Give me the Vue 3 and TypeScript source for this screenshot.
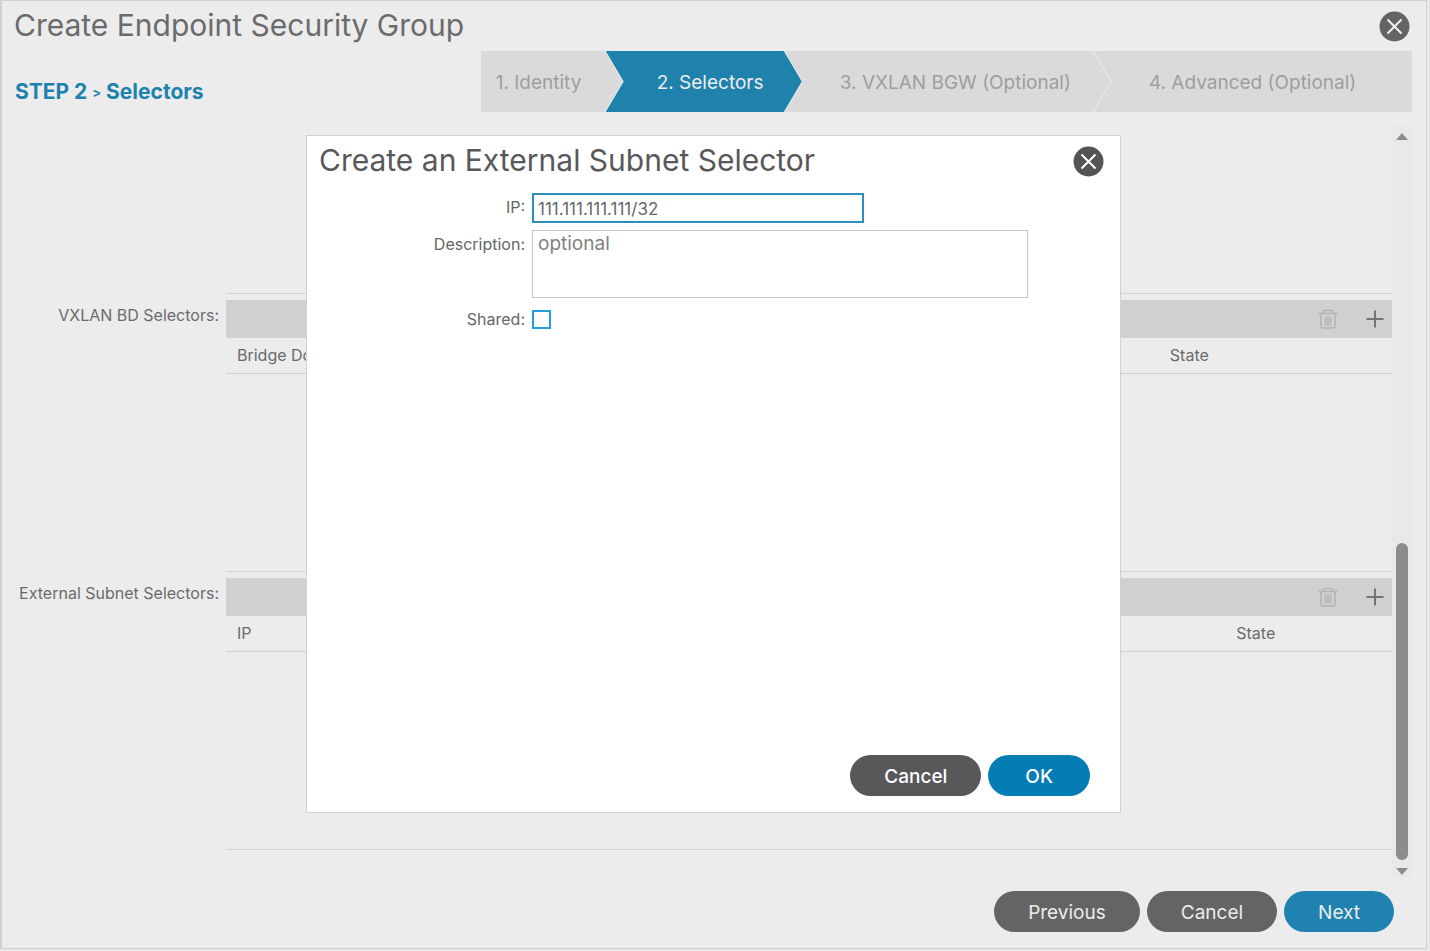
<script setup lang="ts">
import { ref } from 'vue'

interface Step {
  label: string
  active: boolean
}

interface SelectorGrid {
  id: string
  label: string
  firstColumn: string
  stateWidth: string
}

const steps: Step[] = [
  { label: '1. Identity', active: false },
  { label: '2. Selectors', active: true },
  { label: '3. VXLAN BGW (Optional)', active: false },
  { label: '4. Advanced (Optional)', active: false },
]

const grids: SelectorGrid[] = [
  { id: 'vxlan', label: 'VXLAN BD Selectors:', firstColumn: 'Bridge Domain', stateWidth: '20%' },
  { id: 'subnet', label: 'External Subnet Selectors:', firstColumn: 'IP', stateWidth: '14.3%' },
]

const ip = ref('111.111.111.111/32')
const description = ref('')
const shared = ref(false)
</script>

<template>
  <div class="page">
    <main class="wizard">
      <header class="bar">
        <h1 class="title">Create Endpoint Security Group</h1>
        <button class="close" type="button" aria-label="Close wizard">
          <svg viewBox="0 0 31 31" width="31" height="31"><circle cx="15.5" cy="15.5" r="15" /><path d="M8.5 8.5l14 14M22.5 8.5l-14 14" /></svg>
        </button>
      </header>

      <div class="progress">
        <h2 class="step-title">STEP 2 <span class="separator">&gt;</span> Selectors</h2>
        <ol class="steps">
          <li v-for="step in steps" :key="step.label" class="step" :class="{ active: step.active }">
            {{ step.label }}
          </li>
        </ol>
      </div>

      <div class="content">
        <div class="fields">
          <div class="previous-grid"></div>
          <section v-for="grid in grids" :key="grid.id" class="field">
            <h3 :id="grid.id" class="label">{{ grid.label }}</h3>
            <div class="grid">
              <div class="toolbar">
                <button type="button" class="tool trash" aria-label="Delete" disabled>
                  <svg viewBox="0 0 20 20" width="20" height="20">
                    <path d="M0.5 4.5h19M5.5 4V2.5q0-1 1-1h7q1 0 1 1V4M3 5v12q0 2 2 2h10q2 0 2-2V5M7.5 7.5v9M10 7.5v9M12.5 7.5v9" />
                  </svg>
                </button>
                <button type="button" class="tool" aria-label="Add">
                  <svg viewBox="0 0 20 20" width="20" height="20"><path d="M1.5 10h17M10 1.5v17" /></svg>
                </button>
              </div>
              <table :aria-labelledby="grid.id">
                <thead>
                  <tr>
                    <th scope="col">{{ grid.firstColumn }}</th>
                    <th scope="col" :style="{ width: grid.stateWidth }">State</th>
                  </tr>
                </thead>
              </table>
            </div>
          </section>
        </div>
        <div class="scrollbar" aria-hidden="true">
          <span class="arrow up"></span>
          <span class="track"><span class="thumb"></span></span>
          <span class="arrow down"></span>
        </div>
      </div>

      <footer class="actions">
        <button type="button" class="pill muted">Previous</button>
        <button type="button" class="pill muted">Cancel</button>
        <button type="button" class="pill next">Next</button>
      </footer>

      <div class="overlay">
        <form class="dialog" role="dialog" aria-labelledby="dialog-title" @submit.prevent>
          <header class="bar">
            <h2 id="dialog-title" class="title">Create an External Subnet Selector</h2>
            <button class="close" type="button" aria-label="Close dialog">
              <svg viewBox="0 0 31 31" width="31" height="31"><circle cx="15.5" cy="15.5" r="15" /><path d="M8.5 8.5l14 14M22.5 8.5l-14 14" /></svg>
            </button>
          </header>
          <div class="form">
            <label class="label" for="ip">IP:</label>
            <input id="ip" v-model="ip" class="ip" type="text" />
            <label class="label" for="description">Description:</label>
            <textarea id="description" v-model="description" class="description" placeholder="optional"></textarea>
            <label class="label" for="shared">Shared:</label>
            <input id="shared" v-model="shared" class="check" type="checkbox" />
          </div>
          <div class="dialog-actions">
            <button type="button" class="pill dark">Cancel</button>
            <button type="submit" class="pill ok">OK</button>
          </div>
        </form>
      </div>
    </main>
  </div>
</template>

<style>
body {
  background: #e9e9e9;
}
</style>

<style scoped>
* {
  box-sizing: border-box;
}

.page {
  display: flex;
  min-height: 100vh;
  padding: 0 3px 2px 0;
  font-family: Inter, "Liberation Sans", sans-serif;
  color: #6b6b6d;
}

h1,
h2,
h3,
ol {
  margin: 0;
  padding: 0;
}

button,
input,
textarea {
  font-family: inherit;
}

.wizard {
  position: relative;
  flex: 1;
  display: flex;
  flex-direction: column;
  border: 1px solid #cfcfcf;
  border-left-width: 2px;
  background: #ececec;
}

.bar {
  display: flex;
  justify-content: space-between;
  align-items: center;
  height: 50px;
  padding: 0 16px 0 12px;
}

.title {
  padding-bottom: 2px;
  font-size: 30px;
  line-height: 40px;
  font-weight: 400;
}

.close {
  display: flex;
  padding: 0;
  border: 0;
  background: none;
}

.close svg {
  fill: #646464;
}

.close path {
  stroke: #f2f2f2;
  stroke-width: 2;
}

.progress {
  display: grid;
  grid-template-columns: 1fr 2fr;
  padding: 0 14px 0 13px;
}

.step-title {
  padding-top: 28px;
  font-size: 21px;
  line-height: 26px;
  font-weight: 700;
  color: #1f82ae;
}

.separator {
  font-size: 13px;
  vertical-align: 2px;
}

.steps {
  display: grid;
  grid-template-columns: 125fr 179fr 309fr 318fr;
  list-style: none;
  font-size: 19px;
  line-height: 59px;
  color: #9e9e9e;
}

.step {
  margin-right: -17px;
  padding-top: 2px;
  padding-left: 55px;
  background: #dadada;
  white-space: nowrap;
  clip-path: polygon(0 0, calc(100% - 18px) 0, 100% 50%, calc(100% - 18px) 100%, 0 100%, 18px 50%);
}

.step:first-child {
  padding-left: 15px;
  clip-path: polygon(0 0, calc(100% - 18px) 0, 100% 50%, calc(100% - 18px) 100%, 0 100%);
}

.step:last-child {
  margin-right: 0;
  clip-path: polygon(0 0, 100% 0, 100% 100%, 0 100%, 18px 50%);
}

.step.active {
  padding-left: 51px;
  background: #1f82ac;
  color: #ededed;
}

.content {
  flex: 1;
  display: flex;
  margin: 13px 14px 0 13px;
}

.fields {
  flex: 1;
  display: flex;
  flex-direction: column;
  gap: 6px;
  padding-bottom: 27px;
}

.previous-grid {
  height: 169px;
  margin-left: 211px;
  border-bottom: 1px solid #d4d4d4;
}

.field {
  flex: 1;
  display: flex;
  gap: 7px;
}

.label {
  width: 204px;
  font-size: 16px;
  line-height: 30px;
  font-weight: 400;
  text-align: right;
  white-space: nowrap;
}

.grid {
  flex: 1;
  border-bottom: 1px solid #d4d4d4;
}

.toolbar {
  display: flex;
  justify-content: flex-end;
  align-items: center;
  gap: 27px;
  height: 38px;
  padding-right: 7px;
  background: #d0d0d0;
}

.tool {
  display: flex;
  padding: 0;
  border: 0;
  background: none;
}

.tool svg {
  fill: none;
  stroke: #747474;
  stroke-width: 2;
}

.trash svg {
  stroke: #b3b3b3;
  stroke-width: 1.5;
}

table {
  width: 100%;
  border-collapse: collapse;
  table-layout: fixed;
}

th {
  height: 35px;
  padding: 0 11px;
  border-bottom: 1px solid #d0d0d0;
  font-size: 16px;
  font-weight: 400;
  text-align: left;
}

.scrollbar {
  display: flex;
  flex-direction: column;
  align-items: center;
  width: 20px;
  padding: 8px 0 2px;
  background: #e9e9e9;
}

.arrow {
  border: 6px solid transparent;
}

.up {
  border-top: 0;
  border-bottom: 7px solid #8c8c8c;
}

.down {
  border-bottom: 0;
  border-top: 7px solid #8c8c8c;
}

.track {
  flex: 1;
  display: flex;
  align-items: flex-end;
  padding-bottom: 8px;
}

.thumb {
  width: 12px;
  height: 44%;
  border-radius: 6px;
  background: #8c8c8c;
}

.actions {
  display: flex;
  justify-content: flex-end;
  gap: 7px;
  padding: 14px 32px 16px;
}

.pill {
  height: 41px;
  padding: 2px 34px 0;
  border: 0;
  border-radius: 21px;
  font-size: 19px;
  font-weight: 500;
  color: #ececec;
}

.actions .pill {
  font-weight: 400;
}

.muted {
  background: #646464;
}

.next {
  background: #1f82b0;
}

.overlay {
  position: absolute;
  inset: 0;
  display: flex;
  padding: 134px 305px 135px 304px;
}

.dialog {
  flex: 1;
  display: flex;
  flex-direction: column;
  border: 1px solid #d2d2d2;
  background: #ffffff;
  color: #58585b;
}

.dialog .close svg {
  fill: #545456;
}

.dialog .close path {
  stroke: #ffffff;
}

.form {
  flex: 1;
  display: grid;
  grid-template-columns: 204px 1fr;
  grid-template-rows: 30px 68px 28px;
  gap: 7px;
  padding: 7px 92px 0 14px;
}

.form .label {
  line-height: 28px;
  color: #666668;
}

.ip {
  width: 67%;
  height: 30px;
  padding: 1px 4px 0;
  border: 2px solid #2a8fbd;
  outline: 0;
  font-size: 17px;
  color: #666668;
}

.description {
  width: 100%;
  height: 68px;
  padding: 1px 5px;
  border: 1px solid #c4c4c4;
  resize: none;
  font-size: 19px;
  line-height: 24px;
}

.description::placeholder {
  color: #808080;
}

.check {
  appearance: none;
  align-self: center;
  width: 19px;
  height: 19px;
  margin: 0;
  border: 2px solid #21a0dc;
  background: #ffffff;
}

.dialog-actions {
  display: flex;
  justify-content: flex-end;
  gap: 7px;
  padding: 0 30px 16px;
}

.dialog .pill {
  color: #ffffff;
}

.dark {
  background: #58585a;
}

.dialog .ok {
  padding: 2px 37px 0;
  background: #047cb4;
}
</style>
